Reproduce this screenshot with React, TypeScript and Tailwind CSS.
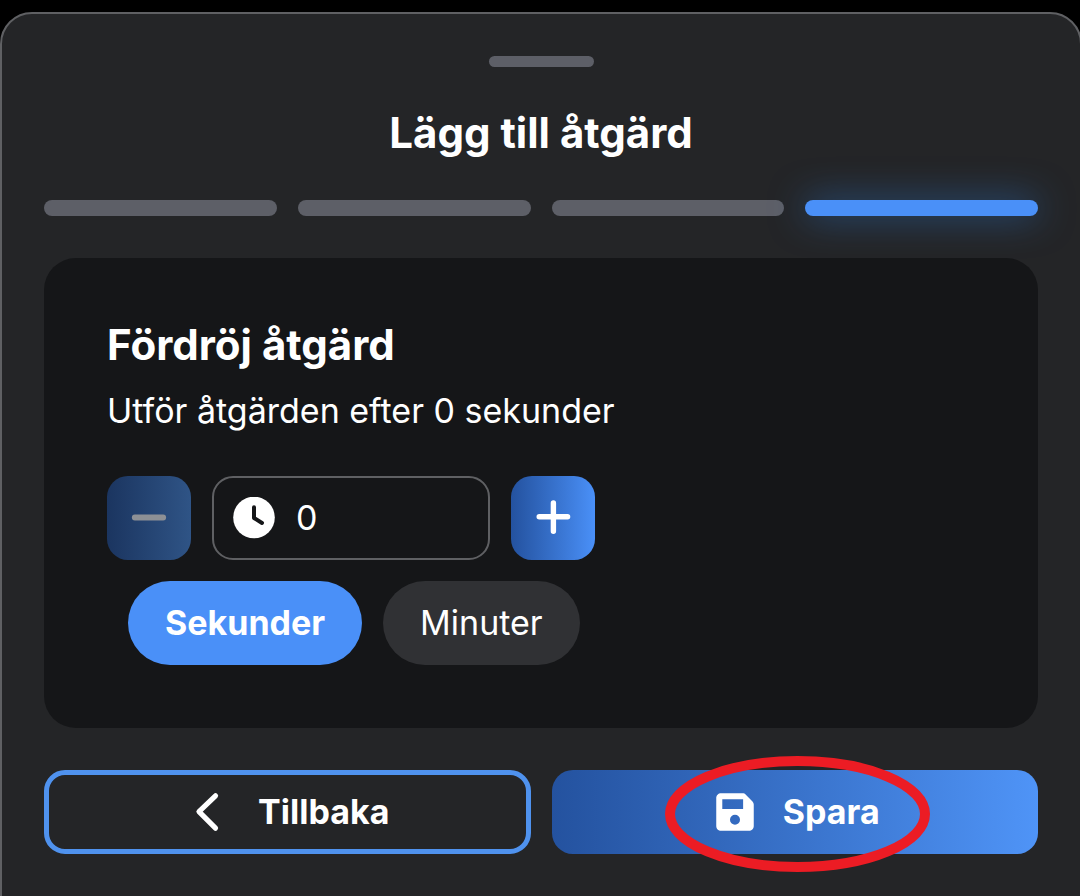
import { useState } from 'react';

const steps = [1, 2, 3, 4];
const currentStep = 4;

function ClockIcon() {
  return (
    <svg viewBox="0 0 42 42" className="size-[42px] shrink-0" aria-hidden="true">
      <circle cx="21" cy="20.5" r="20.8" fill="#fff" />
      <path d="M21 10.2V21L29 26" fill="none" stroke="#151618" strokeWidth="4" strokeLinecap="round" strokeLinejoin="round" />
    </svg>
  );
}

function MinusIcon() {
  return (
    <svg viewBox="0 0 42 42" className="size-[42px]" aria-hidden="true">
      <path d="M6.8 20.5H35.2" stroke="#8d9095" strokeWidth="5.8" strokeLinecap="round" />
    </svg>
  );
}

function PlusIcon() {
  return (
    <svg viewBox="0 0 42 42" className="size-[42px]" aria-hidden="true">
      <path d="M7.2 19.7H35.6M21.4 5.9V34.2" stroke="#fff" strokeWidth="5.4" strokeLinecap="round" />
    </svg>
  );
}

function BackIcon() {
  return (
    <svg viewBox="0 0 50 50" className="size-[50px]" aria-hidden="true">
      <path d="M30.5 8.8L14 24.6L30.5 41.2" fill="none" stroke="#fff" strokeWidth="5.2" strokeLinecap="round" strokeLinejoin="round" />
    </svg>
  );
}

function SaveIcon() {
  return (
    <svg viewBox="0 0 24 24" className="size-[50px]" aria-hidden="true">
      <path
        fill="#fff"
        fillRule="evenodd"
        d="M5.3 3H15.6C16.2 3 16.8 3.2 17.2 3.7L20.4 6.9C20.8 7.3 21 7.8 21 8.4V18.7C21 20 20 21 18.7 21H5.3C4 21 3 20 3 18.7V5.3C3 4 4 3 5.3 3ZM5.9 5.9V10.5H15.9V5.9ZM12 13.3A2.4 2.4 0 1 0 12 18.1A2.4 2.4 0 1 0 12 13.3Z"
      />
    </svg>
  );
}

export default function App() {
  const [delay, setDelay] = useState(0);
  const [unit, setUnit] = useState('Sekunder');

  return (
    <div className="min-h-screen overflow-hidden bg-black pt-3 font-['Inter','Liberation_Sans',sans-serif] text-white">
      <main className="-mr-0.5 min-h-screen rounded-t-[32px] border-2 border-[#5f6063] bg-[#242527] p-[42px]">
        <div className="mx-auto h-[11px] w-[105px] rounded-full bg-[#5d5f67]" />
        <h1 className="mt-10 mb-[41px] text-center text-[42px] leading-[52px] font-bold">Lägg till åtgärd</h1>

        <div className="flex gap-[21px]">
          {steps.map((step) => (
            <div
              key={step}
              className={
                step === currentStep
                  ? 'h-4 flex-1 rounded-full bg-[#4a90f8] shadow-[0_0_36px_rgba(45,125,220,0.6)]'
                  : 'h-4 flex-1 rounded-full bg-[#5d5f67]'
              }
            />
          ))}
        </div>

        <section className="relative mt-[42px] rounded-[32px] bg-[#151618] p-[63px]">
          <h2 className="text-[42px] leading-[48px] font-bold">Fördröj åtgärd</h2>
          <p className="mt-5 text-[34px] leading-[44px]">
            Utför åtgärden efter {delay} {unit.toLowerCase()}
          </p>
          <div className="mt-[43px] flex flex-wrap gap-[21px]">
            <button
              type="button"
              aria-label="Minska"
              disabled={delay === 0}
              onClick={() => setDelay(delay - 1)}
              className="flex size-[84px] items-center justify-center rounded-[21px] bg-linear-to-r from-[#1b3560] to-[#2f5486]"
            >
              <MinusIcon />
            </button>
            <label className="flex h-[84px] w-[278px] items-center gap-[21px] rounded-[21px] border-2 border-[#5f6063] px-[19px]">
              <ClockIcon />
              <input
                aria-label="Fördröjning"
                inputMode="numeric"
                value={delay}
                onChange={(event) => setDelay(Number(event.target.value) || 0)}
                className="w-full min-w-0 bg-transparent text-[34px] leading-[44px] outline-none"
              />
            </label>
            <button
              type="button"
              aria-label="Öka"
              onClick={() => setDelay(delay + 1)}
              className="flex size-[84px] items-center justify-center rounded-[21px] bg-linear-to-r from-[#24529f] to-[#4a90f8]"
            >
              <PlusIcon />
            </button>
          </div>
          <div className="mt-[21px] ml-[21px] flex gap-[21px]">
            {['Sekunder', 'Minuter'].map((name) => (
              <button
                key={name}
                type="button"
                aria-pressed={unit === name}
                onClick={() => setUnit(name)}
                className={
                  unit === name
                    ? 'h-[84px] rounded-full bg-[#4a90f8] px-[37px] pb-0.5 text-[34px] font-bold'
                    : 'h-[84px] rounded-full bg-[#303134] px-[37px] pb-0.5 text-[34px]'
                }
              >
                {name}
              </button>
            ))}
          </div>
        </section>

        <div className="mt-[42px] grid grid-cols-2 gap-[21px]">
          <button
            type="button"
            className="flex h-[84px] items-center justify-center gap-[23px] rounded-[21px] border-[5px] border-[#4f92ee] text-[34px] font-bold"
          >
            <BackIcon />
            <span className="pb-0.5">Tillbaka</span>
          </button>
          <button
            type="button"
            className="flex h-[84px] items-center justify-center rounded-[21px] bg-linear-to-r from-[#24529f] to-[#4f94f7] text-[34px] font-bold"
          >
            <span className="relative flex items-center gap-[23px]">
              <SaveIcon />
              <span className="pb-0.5">Spara</span>
              <svg
                viewBox="0 0 265 116"
                className="pointer-events-none absolute -top-[30px] -left-[45px] h-[116px] w-[265px] max-w-none"
                aria-hidden="true"
              >
                <ellipse cx="132.5" cy="58" rx="127.5" ry="53" fill="none" stroke="#ec1c24" strokeWidth="10" />
              </svg>
            </span>
          </button>
        </div>
      </main>
    </div>
  );
}
